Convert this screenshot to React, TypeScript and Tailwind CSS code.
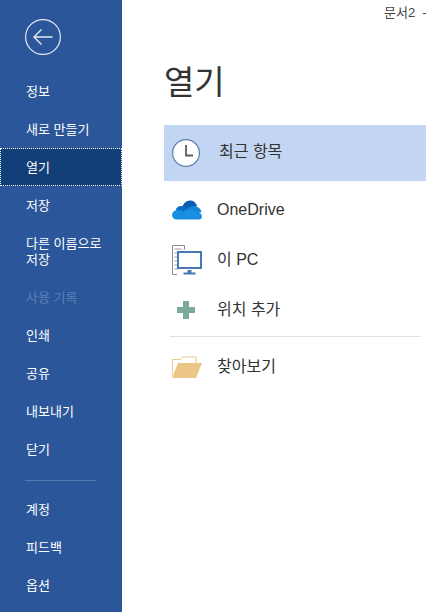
import React from 'react';

const FONT = "font-['Liberation_Sans','Noto_Sans_CJK_KR',sans-serif]";

const BackIcon = () => (
  <svg width="36" height="36" viewBox="0 0 36 36" fill="none" stroke="#e3e9f3" strokeWidth="1.2">
    <circle cx="18" cy="18" r="17.4" />
    <path d="M27.5 18H9M16.5 10.5L9 18l7.5 7.5" strokeWidth="1.4" />
  </svg>
);

const ClockIcon = () => (
  <svg width="28" height="28" viewBox="0 0 28 28" fill="none">
    <circle cx="14" cy="14" r="13.4" fill="#fff" stroke="#5d80b0" strokeWidth="1.2" />
    <path d="M14 6V16.500H21" stroke="#5b5b5b" strokeWidth="1.8" />
  </svg>
);

const CloudIcon = () => (
  <svg width="30" height="20" viewBox="0 0 30 20">
    <path d="M10 8C11 3 15 0 19 .5c3 .4 5 2.5 6 5.5L16 12z" fill="#0a5cb0" />
    <path d="M4 9c1-2 3-3.500 6-3 1.500.2 3 1 4 2l5 8-14 1z" fill="#0f6fc6" />
    <path d="M15 9c2-2.500 6-3.500 9-2.500 3 .8 5 3 5.500 5.500L20 15z" fill="#1484d6" />
    <path d="M5 19.500C2 19.500 0 17.500 0 15c0-2.500 2-4.700 5-5 2.500-.2 4.500.5 6 2 1.500-1.500 4-3 7-2.500 2.500.3 4.500 1.500 6 3 3-.5 6 1 6 4 0 1.500-1 3-3 3z" fill="#1a8fe0" />
  </svg>
);

const PcIcon = () => (
  <svg width="30" height="30" viewBox="0 0 30 30" fill="none">
    <path d="M12.500 4.500V.5H.5V29.500H5" stroke="#8a8a8a" strokeWidth="1" />
    <path d="M2.500 4h7M2.500 8h3M2.500 12h3M2.500 16h3M2.500 20h3M2.500 24h3" stroke="#9a9a9a" strokeWidth="1" />
    <rect x="6" y="7" width="23" height="16" fill="#fff" stroke="#4a7ab5" strokeWidth="2" />
    <path d="M15.500 25h4v2.500h-4zM11.500 27.500h12v2h-12z" fill="#4a7ab5" />
  </svg>
);

const PlusIcon = () => (
  <svg width="18" height="18" viewBox="0 0 18 18" className="ml-[5px]">
    <path d="M6 0h6v6h6v6h-6v6H6v-6H0V6h6z" fill="#7bab98" />
  </svg>
);

const FolderIcon = () => (
  <svg width="30" height="22" viewBox="0 0 30 22">
    <path d="M.5 21.500V3.500h8l2-2.500h13.500v6" fill="#fff" stroke="#e8c88e" strokeWidth="1" />
    <path d="M0 22L6 7h24l-6 15z" fill="#ebc686" />
    <path d="M0 22V16L2 22z" fill="#f3dcb2" />
  </svg>
);

const navTop = ['정보', '새로 만들기', '열기', '저장', '다른 이름으로 저장', '사용 기록', '인쇄', '공유', '내보내기', '닫기'];
const navBottom = ['계정', '피드백', '옵션'];

const NavItem: React.FC<{ label: string }> = ({ label }) => {
  const selected = label === '열기';
  const disabled = label === '사용 기록';
  const tall = label === '다른 이름으로 저장';
  return (
    <div
      className={`flex items-center pt-[2px] pr-3 text-[13px] leading-[16px] ${tall ? 'h-[54px]' : 'h-[38px]'} ${
        selected ? 'bg-[#123f78] border border-dotted border-white pl-[25px]' : 'pl-[26px]'
      } ${disabled ? 'text-[#5b7fb5]' : 'text-white'}`}
    >
      {tall ? (
        <span>
          다른 이름으로
          <br />
          저장
        </span>
      ) : (
        label
      )}
    </div>
  );
};

const PlaceRow: React.FC<{ icon: React.ReactNode; label: string }> = ({ icon, label }) => (
  <div className="flex items-center h-[50px] text-[16px] text-[#333333]">
    <div className="w-[53px] pl-[8px] flex">{icon}</div>
    <span>{label}</span>
  </div>
);

export default function App() {
  return (
    <div className={`flex w-[426px] h-[612px] overflow-hidden bg-white ${FONT}`}>
      <aside className="w-[122px] shrink-0 bg-[#2b579a] flex flex-col">
        <div className="pt-[19px] pl-[25px] h-[72px]">
          <BackIcon />
        </div>
        {navTop.map((label) => (
          <NavItem key={label} label={label} />
        ))}
        <div className="h-px bg-[#5379b0] ml-[25px] mr-[26px] mt-[12px] mb-[9px]" />
        <div>
          {navBottom.map((label) => (
            <NavItem key={label} label={label} />
          ))}
        </div>
      </aside>
      <main className="flex-1 min-w-0 flex flex-col">
        <div className="h-[26px] flex justify-end">
          <span className="w-[42px] shrink-0 whitespace-pre text-[13px] leading-[26px] text-[#444444] overflow-hidden">문서2  -</span>
        </div>
        <h1 className="pl-[42px] h-[99px] pt-[33px] text-[33px] leading-[48px] text-[#333333] font-normal">열기</h1>
        <div className="pl-[42px]">
          <div className="h-[56px] pb-[2px] bg-[#c2d5f2] flex items-center text-[16px] text-[#333333]">
            <div className="w-[55px] pl-[8px] pt-[2px]">
              <ClockIcon />
            </div>
            <span>최근 항목</span>
          </div>
          <div className="pt-[4px]">
            <PlaceRow icon={<CloudIcon />} label="OneDrive" />
            <PlaceRow icon={<PcIcon />} label="이 PC" />
            <PlaceRow icon={<PlusIcon />} label="위치 추가" />
          </div>
          <div className="h-px bg-[#e1e1e1] mt-[1px] ml-[6px] mr-[5px]" />
          <div className="pt-[5px]">
            <PlaceRow icon={<FolderIcon />} label="찾아보기" />
          </div>
        </div>
      </main>
    </div>
  );
}
